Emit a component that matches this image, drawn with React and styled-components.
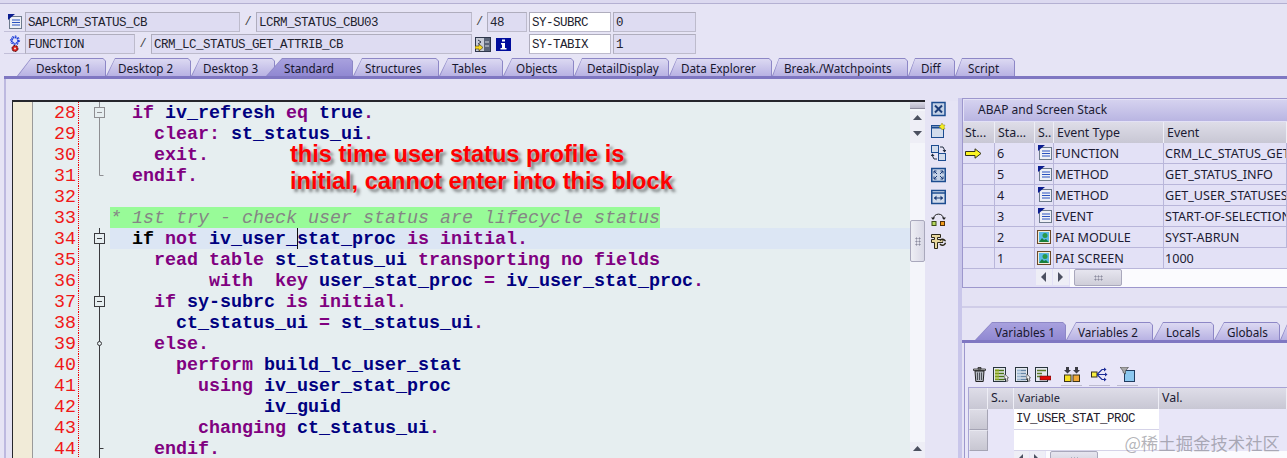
import React from 'react'
import styled, { createGlobalStyle } from 'styled-components'

const GlobalStyle = createGlobalStyle`
  html, body { margin: 0; padding: 0; background: #e6e4f5; }
`

const UI_FONT = `"Noto Sans", "DejaVu Sans", sans-serif`
const MONO_FONT = `"Liberation Mono", "Courier New", monospace`

const Screen = styled.div`
  position: relative;
  width: 1287px;
  height: 458px;
  overflow: hidden;
  display: flex;
  flex-direction: column;
  background: #e6e4f5;
  font-family: ${UI_FONT};
  color: #1b1b33;
`

const TopStrip = styled.div`
  height: 3px;
  flex: none;
  background: #dcd9f0;
  border-bottom: 1px solid #b4b0d2;
`

const HeaderFields = styled.div`
  flex: none;
  display: flex;
  flex-direction: column;
  gap: 2px;
  padding-top: 8px;
`

const FieldRow = styled.div`
  display: flex;
  height: 20px;
`

const IconCell = styled.div`
  width: 21px;
  margin-left: 4px;
  display: flex;
  align-items: center;
  justify-content: center;
  border-bottom: 1px solid #c2bfd8;
  box-sizing: border-box;
`

const Field = styled.div`
  box-sizing: border-box;
  width: ${({ $w }) => $w}px;
  margin-right: ${({ $mr }) => $mr || 0}px;
  height: 20px;
  padding-left: 2px;
  background: ${({ $white }) => ($white ? '#ffffff' : '#dedcf2')};
  border: 1px solid #afadbd;
  border-right-color: #bdbbcc;
  border-bottom-color: #bdbbcc;
  font: 12.5px/21px ${MONO_FONT};
  letter-spacing: -0.5px;
  color: #22222e;
  white-space: pre;
  overflow: hidden;
`

const Slash = styled.div`
  width: ${({ $w }) => $w}px;
  text-align: center;
  font: 12px/20px ${MONO_FONT};
  color: #444;
`

const HeaderButtons = styled.div`
  width: 57px;
  display: flex;
  align-items: center;
  gap: 5px;
  padding-left: 3px;
  box-sizing: border-box;
`

const TabStrip = styled.div`
  flex: none;
  display: flex;
  padding-top: ${({ $top }) => $top}px;
  padding-left: ${({ $left }) => $left}px;
  margin-left: ${({ $offset }) => $offset || 0}px;
  border-bottom: 3px solid #7f77c2;
`

const Tab = styled.div`
  position: relative;
  flex: none;
  box-sizing: border-box;
  width: ${({ $w }) => $w}px;
  height: 18px;
  margin-left: ${({ $ml }) => $ml || 0}px;
  padding-left: ${({ $text }) => $text}px;
  font-size: 11.7px;
  line-height: 21px;
  white-space: nowrap;
  color: #17172e;
  background: #8d87c6;
  clip-path: polygon(0 100%, ${({ $slant }) => $slant}px 0, calc(100% - 3px) 0, 100% 3px, 100% 100%);
  &::before {
    content: '';
    position: absolute;
    inset: 1px 1px 0 1px;
    z-index: -1;
    clip-path: polygon(0 100%, ${({ $slant }) => $slant - 1}px 0, calc(100% - 2px) 0, 100% 2px, 100% 100%);
    background: ${({ $active }) =>
      $active
        ? 'linear-gradient(#a8a1de, #9088d2)'
        : 'linear-gradient(#dcd9f2, #b8b2e3)'};
  }
`

const Body = styled.div`
  flex: 1;
  min-height: 0;
  display: flex;
  margin-left: 4px;
  padding: 19px 0 0 8px;
  border-left: 2px solid #bdb9e0;
  background: #e4e2f4;
  box-sizing: border-box;
`

const Editor = styled.div`
  position: relative;
  flex: none;
  box-sizing: border-box;
  width: 913px;
  margin: 2px 0 0 -2px;
  display: flex;
  overflow: hidden;
  border-top: 2px solid #26262c;
  border-left: 1px solid #26262c;
  background: #e6eef0;
`

const Margin = styled.div`
  flex: none;
  width: 19px;
  background: #f1ebd8;
  border-right: 1px solid #9a9a9a;
`

const Rows = styled.div`
  flex: 1;
  min-width: 0;
  display: flex;
  flex-direction: column;
`

const Row = styled.div`
  flex: none;
  display: flex;
  height: 21px;
  overflow: hidden;
`

const LineNo = styled.div`
  flex: none;
  box-sizing: border-box;
  width: 46px;
  height: 21px;
  padding-right: 2px;
  text-align: right;
  font: 18.33px/23px ${MONO_FONT};
  color: #f01818;
  border-right: 1px dotted #f00000;
`

const FoldCell = styled.svg`
  flex: none;
  display: block;
  width: 31px;
  height: 21px;
`

const CodeCell = styled.div`
  flex: 1;
  min-width: 0;
  height: 21px;
  display: flex;
  background: ${({ $current }) => ($current ? '#dce6f4' : 'transparent')};
  font: bold 18.33px/23px ${MONO_FONT};
  white-space: pre;
`

const Comment = styled.span`
  height: 21px;
  background: #98fb98;
  color: #858585;
  font-weight: normal;
  font-style: italic;
`

const Token = styled.span`
  color: ${({ $kind }) =>
    $kind === 'k' ? '#800080' : $kind === 'v' ? '#000080' : '#000000'};
`

const Caret = styled.span`
  display: inline-block;
  width: 0;
  height: 21px;
  vertical-align: top;
  border-left: 1px solid #101010;
  margin-right: -1px;
`

const Note = styled.div`
  position: absolute;
  left: 277px;
  top: 39px;
  font: bold 23.6px/27px "Liberation Sans", Arial, sans-serif;
  color: #ff0000;
  text-shadow: 3px 3px 3px rgba(40, 40, 40, 0.55);
  white-space: nowrap;
`

const VScroll = styled.div`
  flex: none;
  width: 15px;
  display: flex;
  flex-direction: column;
  background: #f4f5fa;
`

const ScrollCap = styled.div`
  height: 6px;
  background: linear-gradient(#dcdbe8, #b8b6c8);
  border-bottom: 1px solid #8c8a9c;
  margin-bottom: 2px;
`

const ScrollButton = styled.div`
  flex: none;
  width: ${({ $w }) => $w || 15}px;
  height: 16px;
  display: flex;
  align-items: center;
  justify-content: center;
  background: #eeeef6;
  margin-top: ${({ $auto }) => ($auto ? 'auto' : '0')};
`

const VThumb = styled.div`
  flex: none;
  height: 42px;
  margin-top: 77px;
  display: flex;
  align-items: center;
  justify-content: center;
  background: linear-gradient(90deg, #eeeef4, #d9d8e6);
  border: 1px solid #a9a8bc;
  border-radius: 2px;
  box-sizing: border-box;
`

const Grip = styled.div`
  width: ${({ $w }) => $w}px;
  height: ${({ $h }) => $h}px;
  background-image: radial-gradient(#8d8da0 45%, transparent 50%);
  background-size: 3px 3px;
`

const ToolColumn = styled.div`
  flex: none;
  width: 33px;
  margin-top: 3px;
  padding-left: 6px;
  box-sizing: border-box;
  display: flex;
  flex-direction: column;
  gap: 6px;
  background: #e6e4f5;
`

const RightColumn = styled.div`
  flex: 1;
  min-width: 0;
  display: flex;
  flex-direction: column;
  border-left: 4px solid #c9c6ea;
`

const StackBox = styled.div`
  flex: none;
  height: 190px;
  box-sizing: border-box;
  padding-top: 1px;
  border: 1px solid #9d97cd;
  border-right: none;
  background: #e3e1f6;
`

const StackTitle = styled.div`
  height: 21px;
  margin: 0 0 1px 1px;
  padding-left: 14px;
  font-size: 12px;
  line-height: 20px;
  background: linear-gradient(#d5d2ef, #b9b5e2);
`

const Grid = styled.div`
  display: grid;
  grid-template-columns: ${({ $cols }) => $cols};
  grid-auto-rows: ${({ $row }) => $row}px;
`

const HeadCell = styled.div`
  box-sizing: border-box;
  padding-left: ${({ $pad }) => $pad ?? 2}px;
  font-size: ${({ $size }) => $size || 12.4}px;
  line-height: ${({ $lh }) => $lh || 20}px;
  white-space: nowrap;
  overflow: hidden;
  background: linear-gradient(#dedde8, #c8c7d4);
  border-right: 1px solid #eeeef6;
`

const Cell = styled.div`
  box-sizing: border-box;
  display: flex;
  align-items: center;
  padding-left: ${({ $pad }) => $pad ?? 1}px;
  font-size: 12.6px;
  white-space: nowrap;
  overflow: hidden;
  border-right: 1px solid #b9b6da;
  border-bottom: 1px solid #b9b6da;
  &:last-child { border-right: none; }
`

const HScroll = styled.div`
  display: flex;
  height: 18px;
  padding-left: ${({ $left }) => $left}px;
  gap: 1px;
`

const HTrack = styled.div`
  flex: 1;
  display: flex;
  gap: 1px;
  padding-left: 4px;
  background: #fbfbfe;
`

const HThumb = styled.div`
  width: 48px;
  height: 17px;
  display: flex;
  align-items: center;
  justify-content: center;
  box-sizing: border-box;
  background: linear-gradient(#e6e5ef, #cfced9);
  border: 1px solid #a9a8bc;
  border-radius: 2px;
`

const Splitter = styled.div`
  flex: none;
  height: 2px;
  margin-top: 18px;
  background: #d0cde8;
`

const VarPane = styled.div`
  flex: 1;
  min-height: 0;
  display: flex;
  flex-direction: column;
  background: #e6e4f5;
`

const VarBody = styled.div`
  flex: 1;
  min-height: 0;
  margin-left: 2px;
  padding: 24px 0 0 3px;
  border-left: 1px solid #9d97cd;
  background: #e8e6f8;
`

const VarTools = styled.div`
  height: 19px;
  display: flex;
  align-items: flex-start;
  padding-left: 5px;
`

const ToolBtn = styled.div`
  flex: none;
  width: ${({ $w }) => $w}px;
  height: 18px;
  display: flex;
  justify-content: center;
  border-bottom: ${({ $line }) => ($line ? '1px solid #bdbbcf' : 'none')};
  margin-right: ${({ $mr }) => $mr || 0}px;
`

const VarTable = styled.div`
  margin-top: 1px;
  border: 1px solid #a8a4d4;
  border-right: none;
  border-bottom: none;
`

const RowHandle = styled.div`
  box-sizing: border-box;
  background: linear-gradient(#dddce6, #c8c7d2);
  border: 1px solid #a5a4b4;
  border-top-color: #e8e8f0;
  border-left-color: #e8e8f0;
`

const VarCell = styled.div`
  box-sizing: border-box;
  padding-left: 2px;
  background: ${({ $white }) => ($white ? '#ffffff' : 'transparent')};
  font: 12.5px/20px ${MONO_FONT};
  letter-spacing: -0.5px;
  color: #25202c;
  white-space: pre;
  border-bottom: ${({ $white }) => ($white ? '1px solid #d5d3e8' : 'none')};
`

const Watermark = styled.div`
  position: absolute;
  right: 7px;
  bottom: 5px;
  font: 17.4px/20px "Noto Sans CJK SC", "Noto Sans", sans-serif;
  color: rgba(105, 105, 115, 0.5);
  white-space: nowrap;
`

// small drawings --------------------------------------------------------

const Icon = styled.svg`
  display: block;
  flex: none;
`

const PageIcon = () => (
  <Icon width="16" height="16" viewBox="0 0 16 16">
    <rect x="2.5" y="2.5" width="12" height="12" fill="#eef0f6" stroke="#6d7a8c" />
    <path d="M1 0h7L1 6z" fill="#0a1c90" />
    <path d="M5 6h8M5 8.500h8M5 11h8" stroke="#2a52c0" strokeWidth="1.200" />
  </Icon>
)

const GearIcon = () => (
  <Icon width="14" height="18" viewBox="0 0 14 18">
    <circle cx="7" cy="5.500" r="3.200" fill="none" stroke="#1c3cd8" strokeWidth="2" strokeDasharray="1.500 .6" />
    <circle cx="7" cy="5.500" r="4.600" fill="none" stroke="#1c3cd8" strokeWidth="1" strokeDasharray="1.500 2" />
    <circle cx="7" cy="13.500" r="3" fill="#d8201c" stroke="#401010" strokeWidth="1" strokeDasharray="2 1" />
    <circle cx="7" cy="13.500" r="1" fill="#f4e8e0" />
  </Icon>
)

const ArrowIcon = () => (
  <Icon width="17" height="11" viewBox="0 0 17 11">
    <path d="M.5 3.500h9.500V.8L16 5.500 10 10.200V7.500H.5z" fill="#fbf522" stroke="#33331c" />
  </Icon>
)

const PictureIcon = () => (
  <Icon width="14" height="14" viewBox="0 0 14 14">
    <rect x=".5" y=".5" width="13" height="13" fill="#f2ecd8" stroke="#6c4a28" />
    <rect x="2" y="2" width="10" height="10" fill="#58b8e8" />
    <path d="M2 12l3-4 2 2 2-1 3 3z" fill="#18803c" />
    <circle cx="8" cy="5.500" r="2.500" fill="#2c9848" />
  </Icon>
)

const JumpIcon = () => (
  <Icon width="16" height="15" viewBox="0 0 16 15">
    <rect x=".5" y=".5" width="15" height="14" fill="#c8ccd8" stroke="#30384c" />
    <rect x="9" y="1" width="6" height="13" fill="#5a6478" />
    <path d="M10 5h4M10 9h4" stroke="#d8dce4" />
    <path d="M3 3l3 2-3 2" fill="none" stroke="#30384c" />
    <path d="M0 9h4V7l4 3.500L4 14v-2H0z" fill="#f8d820" stroke="#383010" strokeWidth=".6" />
  </Icon>
)

const InfoIcon = () => (
  <Icon width="15" height="13" viewBox="0 0 15 13">
    <rect width="15" height="13" fill="#000c9c" />
    <path d="M6 1.500h3v2H6zM5 5h4v5h1.500v1.500h-6V10H6V6.500H5z" fill="#ffffff" />
  </Icon>
)

const ToolFrame = ({ children }) => (
  <Icon width="15" height="16" viewBox="0 0 15 16">
    {children}
  </Icon>
)

const CloseIcon = () => (
  <ToolFrame>
    <rect x="1" y="1.500" width="13" height="13" fill="#c4d2e6" stroke="#1c4c90" strokeWidth="1.500" />
    <path d="M4 4.500l7 7M11 4.500l-7 7" stroke="#1c3c78" strokeWidth="2" />
  </ToolFrame>
)

const NewWindowIcon = () => (
  <ToolFrame>
    <rect x=".5" y="2.500" width="12" height="12" fill="#d2dcec" stroke="#1c4c90" />
    <path d="M.5 4.500h12" stroke="#1c4c90" strokeWidth="2" />
    <path d="M8.500 3l1.500-1 1-2 1 2 2 0-1 2 1 2-2 0-1 1-1-2-1.500-.5z" fill="#f6ee20" stroke="#8c8420" strokeWidth=".5" />
  </ToolFrame>
)

const SwapIcon = () => (
  <ToolFrame>
    <rect x=".5" y=".5" width="7" height="7" fill="#d2dcec" stroke="#1c4c90" />
    <rect x="7.500" y="8.500" width="7" height="7" fill="#d2dcec" stroke="#1c4c90" />
    <path d="M9 2h3l1.500 3M6 14H3l-1.500-3" fill="none" stroke="#202c40" />
    <path d="M11.500 5h4l-2 2.500zM-.5 11h4l-2-2.500z" fill="#202c40" />
  </ToolFrame>
)

const FullscreenIcon = () => (
  <ToolFrame>
    <rect x=".75" y="1.500" width="13.500" height="13" fill="#c4d2e6" stroke="#1c4c90" strokeWidth="1.500" />
    <path d="M3 4l3 3M12 4L9 7M3 12l3-3M12 12L9 9M3 4h2.500M3 4v2.500M12 4H9.500M12 4v2.500M3 12h2.500M3 12V9.500M12 12H9.500M12 12V9.500" stroke="#1c3c78" />
  </ToolFrame>
)

const WidthIcon = () => (
  <ToolFrame>
    <rect x=".75" y="1.500" width="13.500" height="13" fill="#d2dcec" stroke="#1c4c90" strokeWidth="1.500" />
    <path d="M1 4h13" stroke="#1c4c90" strokeWidth="1.500" />
    <path d="M3 9h9" stroke="#1c3c78" />
    <path d="M5.500 6.500L3 9l2.500 2.500zM9.500 6.500L12 9l-2.500 2.500z" fill="#1c3c78" />
  </ToolFrame>
)

const HeadsetIcon = () => (
  <ToolFrame>
    <path d="M2.500 8C2.500 1.500 12.500 1.500 12.500 8" fill="none" stroke="#222" />
    <path d="M0 6.500h4L2 9zM11 6.500h4L13 9z" fill="#222" />
    <rect x="1" y="10.500" width="4" height="4" fill="#b4d85c" stroke="#3c4c18" />
    <rect x="9.500" y="10.500" width="4" height="4" fill="#f09c1c" stroke="#50300c" />
  </ToolFrame>
)

const HammerIcon = () => (
  <ToolFrame>
    <path d="M.5 1.500h9v3h-3v2h5.500v3H6.500v6h-3v-6H.5v-3h3v-2h-3z" fill="#e8d8a0" stroke="#2c2818" />
    <path d="M9 7.500a3 3 0 1 1 0 3.500" fill="none" stroke="#2c2818" strokeWidth="1.500" />
    <path d="M12 9h3" stroke="#e6e4f5" strokeWidth="1.500" />
  </ToolFrame>
)

const TrashIcon = () => (
  <Icon width="13" height="15" viewBox="0 0 13 15">
    <path d="M5 .5h3v1.500H5zM.5 2h12v1.500H.5z" fill="#d0d0d0" stroke="#222" strokeWidth=".8" />
    <path d="M2 4h9l-.8 10.500H2.800z" fill="#b8bcc4" stroke="#222" />
    <path d="M4.500 5.500v7.500M6.500 5.500v7.500M8.500 5.500v7.500" stroke="#4c5058" />
  </Icon>
)

const SheetIcon = ({ fill, stripe }) => (
  <Icon width="16" height="15" viewBox="0 0 16 15">
    <rect x=".5" y=".5" width="12" height="14" fill="#e4e8f0" stroke="#28343c" />
    <path d="M2 3.500h9M2 6.500h9M2 9.500h9M2 12.500h9" stroke={stripe} strokeWidth="1.600" />
    <rect x="2" y="2" width="4" height="11" fill={fill} opacity=".55" />
    <path d="M12 7l3.500 4H14l1 3-1.500.5-1-3L11.500 13z" fill="#ffffff" stroke="#222" strokeWidth=".6" />
  </Icon>
)

const RemoveSheetIcon = () => (
  <Icon width="16" height="15" viewBox="0 0 16 15">
    <rect x=".5" y=".5" width="12" height="14" fill="#e4e8f0" stroke="#28343c" />
    <path d="M2 3.500h9M2 6.500h5M2 9.500h5" stroke="#5c7828" strokeWidth="1.600" />
    <rect x="5" y="9" width="11" height="4" fill="#e00808" stroke="#401010" strokeWidth=".5" />
  </Icon>
)

const CompareIcon = () => (
  <Icon width="16" height="15" viewBox="0 0 16 15">
    <path d="M2 0h3v3h2L3.500 6.500 0 3h2zM11 0h3v3h2l-3.500 3.500L9 3h2z" fill="#3c3c44" />
    <rect x=".5" y="8" width="6.500" height="6.500" fill="#f8e020" stroke="#3c3418" />
    <rect x="9" y="8" width="6.500" height="6.500" fill="#f0a838" stroke="#3c3418" />
  </Icon>
)

const TreeIcon = () => (
  <Icon width="17" height="15" viewBox="0 0 17 15">
    <rect x=".5" y="5" width="5.500" height="5" fill="#f6ee40" stroke="#383018" />
    <path d="M6 7.500h10M6 7.500l5-5h2M6 7.500l5 5h2" fill="none" stroke="#1c2c98" strokeWidth="1.100" />
    <path d="M13 .5l2.500 2-2.500 2zM14 5.500l2.500 2-2.500 2zM13 10.500l2.500 2-2.500 2z" fill="#1c2c98" />
  </Icon>
)

const FilterIcon = () => (
  <Icon width="15" height="15" viewBox="0 0 15 15">
    <rect x="4.500" y="3.500" width="10" height="11" fill="#8cc8f0" stroke="#203c60" />
    <path d="M0 0h8.500L5.500 4v3L3 5.500V4z" fill="#a8a8a8" stroke="#3c3c3c" strokeWidth=".6" />
  </Icon>
)

const Arrow = ({ dir }) => {
  const paths = {
    up: 'M0 6L4.500 1 9 6z',
    down: 'M0 1l4.500 5L9 1z',
    left: 'M6 0v10L1 5z',
    right: 'M1 0v10l5-5z',
  }
  return (
    <Icon width="9" height="10" viewBox="0 0 9 10">
      <path d={paths[dir]} fill="#4c5060" />
    </Icon>
  )
}

const Fold = ({ kind, dark }) => {
  const c = dark ? '#3a3a3e' : '#8e8e92'
  return (
    <FoldCell viewBox="0 0 31 21">
      {kind === 'line' && <path d="M20.500 0v21" stroke={c} />}
      {kind === 'box' && (
        <>
          <path d="M20.500 0v5M20.500 16v5" stroke={c} />
          <rect x="15.500" y="5.500" width="10" height="10" fill="#e6eef0" stroke={c} />
          <path d="M18 10.500h5" stroke={c} />
        </>
      )}
      {kind === 'end' && <path d="M20.500 0v10.500h4" fill="none" stroke={c} />}
      {kind === 'tick' && <path d="M20.500 0v21M20.500 10.500h4" fill="none" stroke={c} />}
      {kind === 'dot' && (
        <>
          <path d="M20.500 0v21" stroke={c} />
          <circle cx="20.500" cy="10.500" r="2" fill="#e6eef0" stroke={c} />
        </>
      )}
    </FoldCell>
  )
}

// data ------------------------------------------------------------------

const k = (t) => ['k', t]
const v = (t) => ['v', t]

const codeLines = [
  { no: 28, fold: 'box', tokens: [k('  if '), v('iv_refresh '), k('eq '), v('true'), k('.')] },
  { no: 29, fold: 'line', tokens: [k('    clear: '), v('st_status_ui'), k('.')] },
  { no: 30, fold: 'line', tokens: [k('    exit.')] },
  { no: 31, fold: 'end', tokens: [k('  endif.')] },
  { no: 32, tokens: [] },
  { no: 33, comment: '* 1st try - check user status are lifecycle status' },
  { no: 34, fold: 'box', dark: true, current: true, caret: true, tokens: [['b', '  if '], k('not '), v('iv_user_'), v('stat_proc '), k('is initial.')] },
  { no: 35, fold: 'line', dark: true, tokens: [k('    read table '), v('st_status_ui '), k('transporting no fields')] },
  { no: 36, fold: 'line', dark: true, tokens: [k('         with  key '), v('user_stat_proc '), k('= '), v('iv_user_stat_proc'), k('.')] },
  { no: 37, fold: 'box', dark: true, tokens: [k('    if '), v('sy-subrc '), k('is initial.')] },
  { no: 38, fold: 'line', dark: true, tokens: [v('      ct_status_ui '), k('= '), v('st_status_ui'), k('.')] },
  { no: 39, fold: 'dot', dark: true, tokens: [k('    else.')] },
  { no: 40, fold: 'line', dark: true, tokens: [k('      perform '), v('build_lc_user_stat')] },
  { no: 41, fold: 'line', dark: true, tokens: [k('        using '), v('iv_user_stat_proc')] },
  { no: 42, fold: 'line', dark: true, tokens: [v('              iv_guid')] },
  { no: 43, fold: 'line', dark: true, tokens: [k('        changing '), v('ct_status_ui'), k('.')] },
  { no: 44, fold: 'tick', dark: true, tokens: [k('    endif.')] },
]

const mainTabs = [
  { label: 'Desktop 1', w: 89, slant: 14, text: 19 },
  { label: 'Desktop 2', w: 85, slant: 9, text: 12 },
  { label: 'Desktop 3', w: 84, slant: 9, text: 12 },
  { label: 'Standard', w: 87, slant: 16, text: 18, ml: -9, active: true },
  { label: 'Structures', w: 86, slant: 9, text: 12 },
  { label: 'Tables', w: 64, slant: 9, text: 13 },
  { label: 'Objects', w: 71, slant: 9, text: 13 },
  { label: 'DetailDisplay', w: 95, slant: 8, text: 13 },
  { label: 'Data Explorer', w: 103, slant: 8, text: 12 },
  { label: 'Break./Watchpoints', w: 136, slant: 7, text: 12 },
  { label: 'Diff', w: 47, slant: 7, text: 13 },
  { label: 'Script', w: 60, slant: 7, text: 13 },
]

const varTabs = [
  { label: 'Variables 1', w: 91, slant: 17, text: 20, active: true },
  { label: 'Variables 2', w: 87, slant: 10, text: 12 },
  { label: 'Locals', w: 61, slant: 10, text: 13 },
  { label: 'Globals', w: 66, slant: 10, text: 13 },
  { label: '', w: 30, slant: 8, text: 0 },
]

const stack = [
  { no: 6, Glyph: PageIcon, type: 'FUNCTION', event: 'CRM_LC_STATUS_GET_ATTRIB_CB', here: true },
  { no: 5, Glyph: PageIcon, type: 'METHOD', event: 'GET_STATUS_INFO' },
  { no: 4, Glyph: PageIcon, type: 'METHOD', event: 'GET_USER_STATUSES' },
  { no: 3, Glyph: PageIcon, type: 'EVENT', event: 'START-OF-SELECTION' },
  { no: 2, Glyph: PictureIcon, type: 'PAI MODULE', event: 'SYST-ABRUN' },
  { no: 1, Glyph: PictureIcon, type: 'PAI SCREEN', event: '1000' },
]

const STACK_COLS = '32px 40px 19px 110px 1fr'
const VAR_COLS = '19px 26px 145px 1fr'

const tools = [CloseIcon, NewWindowIcon, SwapIcon, FullscreenIcon, WidthIcon, HeadsetIcon, HammerIcon]

const renderTabs = (tabs) =>
  tabs.map((t) => (
    <Tab key={t.label || 'more'} $w={t.w} $slant={t.slant} $text={t.text} $ml={t.ml} $active={t.active}>
      {t.label}
    </Tab>
  ))

export default function App() {
  return (
    <>
      <GlobalStyle />
      <Screen>
        <TopStrip />
        <HeaderFields>
          <FieldRow>
            <IconCell><PageIcon /></IconCell>
            <Field $w={215}>SAPLCRM_STATUS_CB</Field>
            <Slash $w={16}>/</Slash>
            <Field $w={216}>LCRM_STATUS_CBU03</Field>
            <Slash $w={15}>/</Slash>
            <Field $w={40} $mr={2}>48</Field>
            <Field $w={82} $mr={2} $white>SY-SUBRC</Field>
            <Field $w={83}>0</Field>
          </FieldRow>
          <FieldRow>
            <IconCell><GearIcon /></IconCell>
            <Field $w={110}>FUNCTION</Field>
            <Slash $w={16}>/</Slash>
            <Field $w={321}>CRM_LC_STATUS_GET_ATTRIB_CB</Field>
            <HeaderButtons><JumpIcon /><InfoIcon /></HeaderButtons>
            <Field $w={82} $mr={2} $white>SY-TABIX</Field>
            <Field $w={83}>1</Field>
          </FieldRow>
        </HeaderFields>

        <TabStrip $top={4} $left={13} $offset={4}>{renderTabs(mainTabs)}</TabStrip>

        <Body>
          <Editor>
            <Margin />
            <Rows>
              {codeLines.map((line) => (
                <Row key={line.no}>
                  <LineNo>{line.no}</LineNo>
                  <Fold kind={line.fold} dark={line.dark} />
                  <CodeCell $current={line.current}>
                    {line.comment ? (
                      <Comment>{line.comment}</Comment>
                    ) : (
                      <span>
                        {line.tokens.map(([kind, text], i) => (
                          <React.Fragment key={i}>
                            {line.caret && i === 3 && <Caret />}
                            <Token $kind={kind}>{text}</Token>
                          </React.Fragment>
                        ))}
                      </span>
                    )}
                  </CodeCell>
                </Row>
              ))}
            </Rows>
            <VScroll>
              <ScrollCap />
              <ScrollButton><Arrow dir="up" /></ScrollButton>
              <ScrollButton><Arrow dir="down" /></ScrollButton>
              <VThumb><Grip $w={6} $h={9} /></VThumb>
              <ScrollButton $auto><Arrow dir="up" /></ScrollButton>
            </VScroll>
            <Note>
              this time user status profile is
              <br />
              initial, cannot enter into this block
            </Note>
          </Editor>

          <ToolColumn>
            {tools.map((Tool, i) => <Tool key={i} />)}
          </ToolColumn>

          <RightColumn>
            <StackBox>
              <StackTitle>ABAP and Screen Stack</StackTitle>
              <Grid $cols={STACK_COLS} $row={21}>
                <HeadCell $lh={22}>St...</HeadCell>
                <HeadCell $lh={22} $pad={3}>Sta...</HeadCell>
                <HeadCell $lh={22} $pad={3}>S..</HeadCell>
                <HeadCell $lh={22} $pad={3}>Event Type</HeadCell>
                <HeadCell $lh={22} $pad={3}>Event</HeadCell>
                {stack.map((row) => (
                  <React.Fragment key={row.no}>
                    <Cell $pad={2}>{row.here && <ArrowIcon />}</Cell>
                    <Cell $pad={2}>{row.no}</Cell>
                    <Cell $pad={2}><row.Glyph /></Cell>
                    <Cell>{row.type}</Cell>
                    <Cell>{row.event}</Cell>
                  </React.Fragment>
                ))}
              </Grid>
              <HScroll $left={73}>
                <ScrollButton $w={16}><Arrow dir="left" /></ScrollButton>
                <ScrollButton $w={16}><Arrow dir="right" /></ScrollButton>
                <HTrack>
                  <HThumb><Grip $w={9} $h={6} /></HThumb>
                </HTrack>
              </HScroll>
            </StackBox>

            <Splitter />

            <VarPane>
              <TabStrip $top={14} $left={13} $offset={0}>{renderTabs(varTabs)}</TabStrip>
              <VarBody>
                <VarTools>
                  <ToolBtn $w={13} $mr={7}><TrashIcon /></ToolBtn>
                  <ToolBtn $w={16} $mr={6}><SheetIcon fill="#a8c020" stripe="#4c7418" /></ToolBtn>
                  <ToolBtn $w={16} $mr={4}><SheetIcon fill="#c4d8ec" stripe="#6888a8" /></ToolBtn>
                  <ToolBtn $w={16} $mr={10}><RemoveSheetIcon /></ToolBtn>
                  <ToolBtn $w={21} $mr={7} $line><CompareIcon /></ToolBtn>
                  <ToolBtn $w={21} $mr={7} $line><TreeIcon /></ToolBtn>
                  <ToolBtn $w={21} $line><FilterIcon /></ToolBtn>
                </VarTools>
                <VarTable>
                  <Grid $cols={VAR_COLS} $row={21}>
                    <HeadCell />
                    <HeadCell $lh={19} $pad={3}>S...</HeadCell>
                    <HeadCell $lh={19} $pad={4} $size={11}>Variable</HeadCell>
                    <HeadCell $lh={19} $pad={3}>Val.</HeadCell>
                    <RowHandle />
                    <div />
                    <VarCell $white>IV_USER_STAT_PROC</VarCell>
                    <div />
                    <RowHandle />
                    <div />
                    <VarCell $white />
                    <div />
                  </Grid>
                  <HScroll $left={45}>
                    <ScrollButton><Arrow dir="left" /></ScrollButton>
                    <ScrollButton><Arrow dir="right" /></ScrollButton>
                    <HTrack>
                      <HThumb><Grip $w={9} $h={6} /></HThumb>
                    </HTrack>
                  </HScroll>
                </VarTable>
              </VarBody>
            </VarPane>
          </RightColumn>
        </Body>

        <Watermark>@稀土掘金技术社区</Watermark>
      </Screen>
    </>
  )
}
